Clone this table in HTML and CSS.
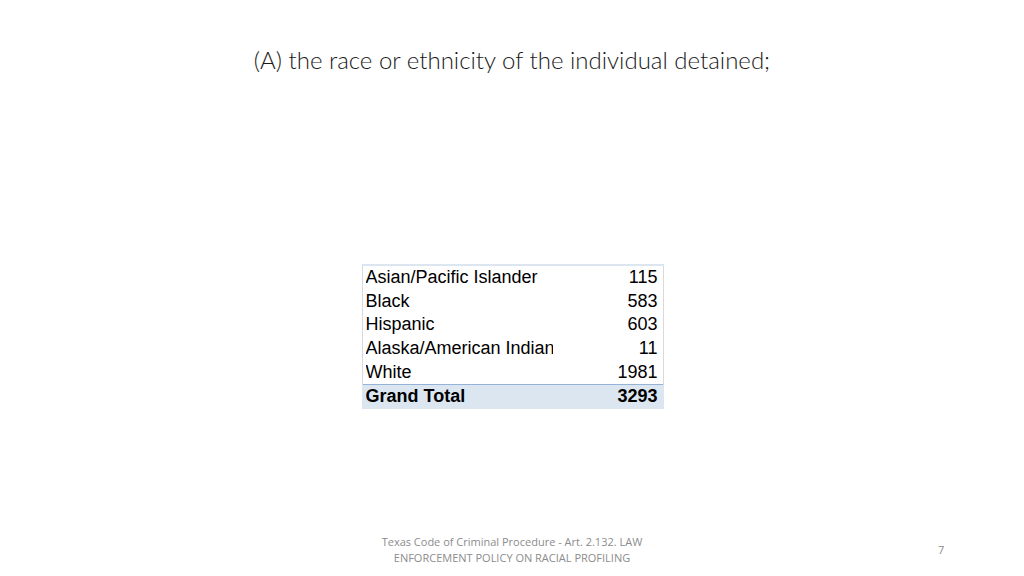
FILE: index.html
```html
<!DOCTYPE html>
<html>
<head>
<meta charset="utf-8">
<link rel="stylesheet" href="styles.css">
</head>
<body>
<div class="slide">
  <h1 class="title">(A) the race or ethnicity of the individual detained;</h1>
  <div class="content">
    <table class="pivot">
      <tr><td class="label"><span>Asian/Pacific Islander</span></td><td class="num">115</td></tr>
      <tr><td class="label"><span>Black</span></td><td class="num">583</td></tr>
      <tr><td class="label"><span>Hispanic</span></td><td class="num">603</td></tr>
      <tr><td class="label"><span>Alaska/American Indian</span></td><td class="num">11</td></tr>
      <tr><td class="label"><span>White</span></td><td class="num">1981</td></tr>
      <tr class="total"><td class="label"><span>Grand Total</span></td><td class="num">3293</td></tr>
    </table>
  </div>
  <div class="footer">
    <div class="source">Texas Code of Criminal Procedure - Art. 2.132. LAW<br>ENFORCEMENT POLICY ON RACIAL PROFILING</div>
    <div class="page">7</div>
  </div>
</div>
</body>
</html>
```
FILE: styles.css
```css
html, body {
  margin: 0;
  padding: 0;
  background: #ffffff;
}
.slide {
  width: 1024px;
  height: 576px;
  display: flex;
  flex-direction: column;
  overflow: hidden;
}
.title {
  margin: 0;
  padding-top: 44px;
  height: 32px;
  text-align: center;
  font-family: "Lato", "Open Sans", sans-serif;
  font-weight: 300;
  font-size: 24px;
  line-height: 32px;
  color: #1a1a1a;
}
.content {
  flex: 1;
  display: flex;
  justify-content: center;
  padding-top: 188px;
  padding-left: 1px;
}
.pivot {
  border-collapse: collapse;
  font-family: "Liberation Sans", Arial, sans-serif;
  font-size: 18px;
  color: #000000;
  align-self: flex-start;
}
.pivot td {
  height: 23.6px;
  padding: 0;
  line-height: 23px;
}
.pivot tr:first-child td {
  border-top: 2px solid #dce6f1;
}
.pivot .label {
  width: 192px;
  max-width: 192px;
  overflow: hidden;
  white-space: nowrap;
  padding-left: 3px;
  border-left: 1px solid #d9d9d9;
}
.pivot .label span {
  display: block;
  width: 187px;
  overflow: hidden;
}
.pivot .num {
  width: 100px;
  text-align: right;
  padding-right: 5px;
  border-right: 1px solid #d9d9d9;
}
.pivot .total td {
  background: #dce6f1;
  font-weight: bold;
  border-top: 1px solid #95b3d7;
  border-left-color: #dce6f1;
  border-right-color: #dce6f1;
  height: 24px;
}
.footer {
  height: 50px;
  position: relative;
  display: flex;
  justify-content: center;
}
.source {
  font-family: "Open Sans", "Liberation Sans", sans-serif;
  font-size: 11px;
  line-height: 16px;
  color: #8c8c8c;
  text-align: center;
  padding-top: 8px;
}
.page {
  position: absolute;
  left: 938px;
  top: 16px;
  font-family: "Open Sans", sans-serif;
  font-size: 11px;
  color: #8c8c8c;
}
```
